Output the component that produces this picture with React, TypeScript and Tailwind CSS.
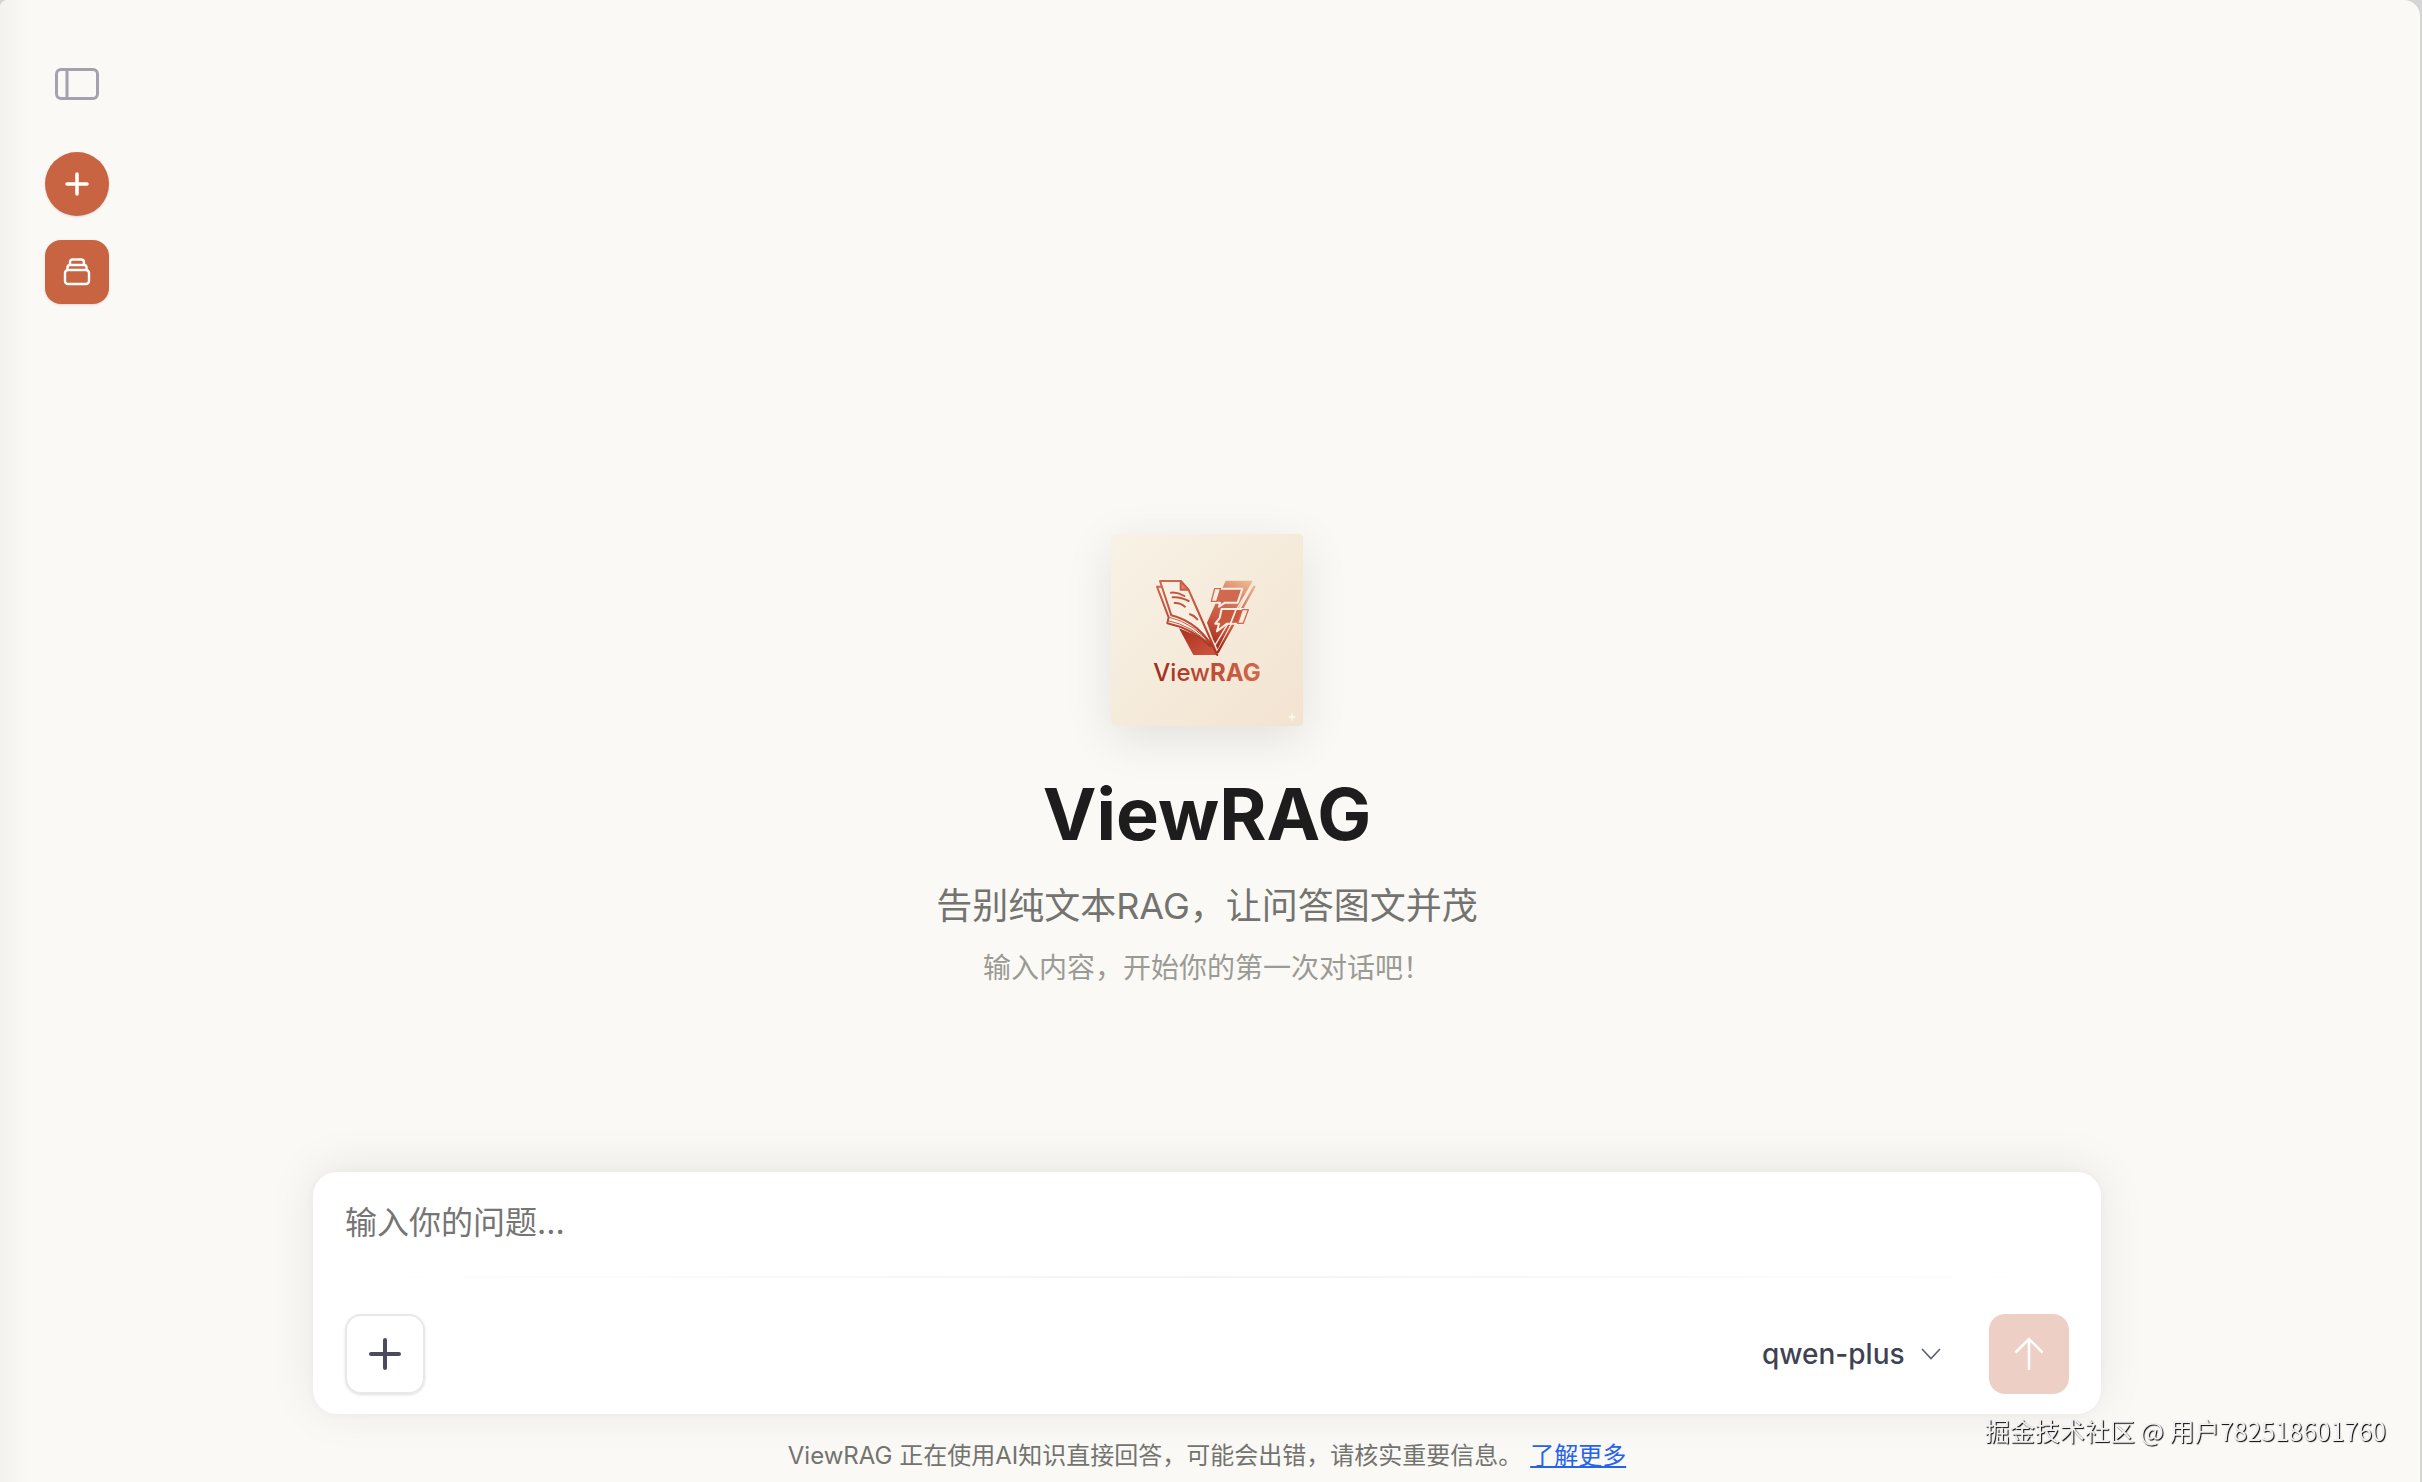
import React, { useState } from 'react';

const Logo = () => (
  <svg viewBox="0 0 192 192" className="w-48 h-48" role="img" aria-label="ViewRAG">
    <defs>
      <linearGradient id="tile" x1="0" y1="0" x2="1" y2="1">
        <stop offset="0" stopColor="#f8f2e6" />
        <stop offset="0.5" stopColor="#f5ebdb" />
        <stop offset="1" stopColor="#f3e3d1" />
      </linearGradient>
      <linearGradient id="page" x1="0" y1="0" x2="0" y2="1">
        <stop offset="0" stopColor="#d2664c" />
        <stop offset="1" stopColor="#ae3424" />
      </linearGradient>
      <linearGradient id="base" x1="0" y1="0" x2="1" y2="1">
        <stop offset="0" stopColor="#a92f20" />
        <stop offset="1" stopColor="#d0583f" />
      </linearGradient>
      <linearGradient id="arm" gradientUnits="userSpaceOnUse" x1="325" y1="63" x2="215" y2="265">
        <stop offset="0" stopColor="#ecb78f" />
        <stop offset="0.35" stopColor="#d2745a" />
        <stop offset="0.7" stopColor="#c4503a" />
        <stop offset="1" stopColor="#9c2418" />
      </linearGradient>
      <linearGradient id="word" x1="0" y1="0" x2="1" y2="0">
        <stop offset="0" stopColor="#9f2a1d" />
        <stop offset="0.5" stopColor="#bd4a35" />
        <stop offset="1" stopColor="#d0694c" />
      </linearGradient>
    </defs>
    <rect width="192" height="192" fill="url(#tile)" />
    <g transform="translate(28 26) scale(0.3333)" strokeLinejoin="round" strokeLinecap="round">
      <path d="M260 62H341L236 268L222 238L204 188Z" fill="url(#arm)" />
      <path d="M346 80L237 276" stroke="url(#arm)" strokeWidth="7" />
      <path d="M334 80L229 254" stroke="#f7ecdd" strokeWidth="4" />
      <path d="M227 86H310L296 128H258L240 140L243 128H217Z" fill="#d0694f" stroke="#f9efe1" strokeWidth="6" />
      <path d="M227 86H245L233 124H217Z" fill="#f6ecdd" stroke="#d0694f" strokeWidth="4" />
      <path d="M248 147H329L314 191H264L234 214L240 191H229L242 174Z" fill="#c9583f" stroke="#f9efe1" strokeWidth="6" />
      <path d="M310 149H328L313 190H296Z" fill="#f6ecdd" stroke="#cf6a4e" strokeWidth="4" />
      <path d="M291 149L275 190" stroke="#f9efe1" strokeWidth="5" />
      <path d="M120 205Q162 222 204 240L236 285H163Z" fill="url(#base)" />
      <path d="M72 80H54L89 172L85 190Q158 205 214 258" fill="#f7efe1" stroke="url(#page)" strokeWidth="6" />
      <path d="M63 63H125L149 90L235 285Q184 187 97 166Z" fill="#f7efe1" stroke="url(#page)" strokeWidth="6" />
      <path d="M92 172Q168 190 222 262M87 182Q160 196 216 258" fill="none" stroke="url(#page)" strokeWidth="3" />
      <path d="M125 63V89H148Z" fill="#d9836c" stroke="#cb5d45" strokeWidth="6" />
      <path d="M96 98Q116 96 136 108M101 112Q124 110 149 123M107 129Q124 128 138 140M153 163Q165 166 175 178" fill="none" stroke="#c4533c" strokeWidth="6" />
    </g>
    <text x="96" y="147" textAnchor="middle" fill="url(#word)" fontSize="24" fontWeight="500" className="font-['Inter',sans-serif]">
      View<tspan fontWeight="700">RAG</tspan>
    </text>
    <path d="M181 178L182 182L186 183L182 184L181 188L180 184L176 183L180 182Z" fill="#fdf7ec" />
  </svg>
);

const SidebarIcon = () => (
  <svg viewBox="0 0 44 32" className="w-11 h-8" fill="none" stroke="#a3a2ae" strokeWidth="3">
    <rect x="1.5" y="1.5" width="41" height="29" rx="4.5" />
    <path d="M12 2V30" />
  </svg>
);

const CollectionIcon = () => (
  <svg viewBox="0 0 28 28" className="w-7 h-7" fill="none" stroke="white" strokeWidth="2.4" strokeLinejoin="round">
    <rect x="2" y="12" width="24" height="14" rx="3" />
    <path d="M4.5 12V9.5Q4.5 7 7 7H21Q23.5 7 23.5 9.5V12" />
    <path d="M7 7V4.5Q7 1.5 10 1.5H18Q21 1.5 21 4.5V7" />
  </svg>
);

export default function App() {
  const [question, setQuestion] = useState('');

  return (
    <div className="min-h-screen bg-[#d5d5d7] pr-[2px] font-['Inter','Noto_Sans_CJK_SC',sans-serif]">
      <div className="flex min-h-screen rounded-tl-lg rounded-tr-2xl bg-[#faf9f5]">
        <aside className="flex w-[154px] shrink-0 flex-col items-center bg-linear-to-r from-[#f3f2ee] to-[#faf9f5] to-20% rounded-tl-lg pt-[68px]">
          <button aria-label="展开侧边栏">
            <SidebarIcon />
          </button>
          <button aria-label="新建对话" className="mt-[52px] flex h-16 w-16 items-center justify-center rounded-full bg-[#c96442] shadow-sm">
            <svg viewBox="0 0 24 24" className="h-6 w-6" stroke="white" strokeWidth="3.5" strokeLinecap="round">
              <path d="M12 2V22M2 12H22" />
            </svg>
          </button>
          <button aria-label="知识库" className="mt-6 flex h-16 w-16 items-center justify-center rounded-2xl bg-[#c96442] shadow-sm">
            <CollectionIcon />
          </button>
        </aside>

        <main className="flex flex-1 flex-col pl-[159px] pr-[319px]">
          <section className="flex flex-1 flex-col items-center justify-end pb-[182px] text-center">
            <div className="overflow-hidden rounded-sm shadow-[0_12px_48px_rgba(0,0,0,0.1)]">
              <Logo />
            </div>
            <h1 className="mt-11 text-[72px] leading-[88px] font-bold text-[#1d1d1d]">ViewRAG</h1>
            <p className="mt-5 text-[36px] leading-[56px] text-[#737370]">告别纯文本RAG，让问答图文并茂</p>
            <p className="mt-3 text-[28px] leading-[44px] text-[#9b9b96]">输入内容，开始你的第一次对话吧！</p>
          </section>

          <form
            className="rounded-3xl bg-white shadow-[0_-4px_48px_rgba(0,0,0,0.08),0_0_8px_rgba(0,0,0,0.03)]"
            onSubmit={(e) => e.preventDefault()}
          >
            <div className="px-8 pt-6">
              <textarea
                aria-label="输入你的问题"
                rows={1}
                value={question}
                onChange={(e) => setQuestion(e.target.value)}
                placeholder="输入你的问题..."
                className="block h-20 w-full resize-none text-[32px] leading-[54px] text-[#1d1d1d] outline-none placeholder:text-[#757575]"
              />
            </div>
            <div className="mx-8 h-[2px] bg-linear-to-r from-transparent via-[#f3f3f3] to-transparent" />
            <div className="flex items-center justify-between px-8 pt-9 pb-5">
              <button type="button" aria-label="添加附件" className="flex h-20 w-20 items-center justify-center rounded-2xl border-2 border-[#e8e8e8] shadow-sm">
                <svg viewBox="0 0 32 32" className="h-8 w-8" stroke="#4a4c5e" strokeWidth="4" strokeLinecap="round">
                  <path d="M16 2V30M2 16H30" />
                </svg>
              </button>
              <div className="flex items-center gap-12">
                <label className="flex items-center gap-4">
                  <select aria-label="模型" className="appearance-none text-[28px] leading-9 font-medium text-[#3f4254] outline-none">
                    <option>qwen-plus</option>
                  </select>
                  <svg viewBox="0 0 20 12" className="h-3 w-5" fill="none" stroke="#5c5f6d" strokeWidth="1.6">
                    <path d="M1 1L10 10.5L19 1" />
                  </svg>
                </label>
                <button type="submit" aria-label="发送" className="flex h-20 w-20 items-center justify-center rounded-2xl bg-[#edcfc5]">
                  <svg viewBox="0 0 32 34" className="h-[34px] w-8" fill="none" stroke="white" strokeWidth="2.6">
                    <path d="M16 33V2M2.5 15.5L16 2L29.5 15.5" />
                  </svg>
                </button>
              </div>
            </div>
          </form>

          <footer className="flex items-center justify-center gap-2 pt-6 pb-2 text-[24px] leading-9 text-[#737370]">
            <span>ViewRAG 正在使用AI知识直接回答，可能会出错，请核实重要信息。</span>
            <a href="#" className="text-[#2563eb] underline">
              了解更多
            </a>
          </footer>
        </main>
      </div>

      <div className="fixed right-9 bottom-[34px] text-[25px] leading-9 text-[#f0f0f0] [text-shadow:1px_1px_1px_#000] font-['Noto_Sans_CJK_SC',sans-serif]">
        掘金技术社区 @ 用户782518601760
      </div>
    </div>
  );
}
